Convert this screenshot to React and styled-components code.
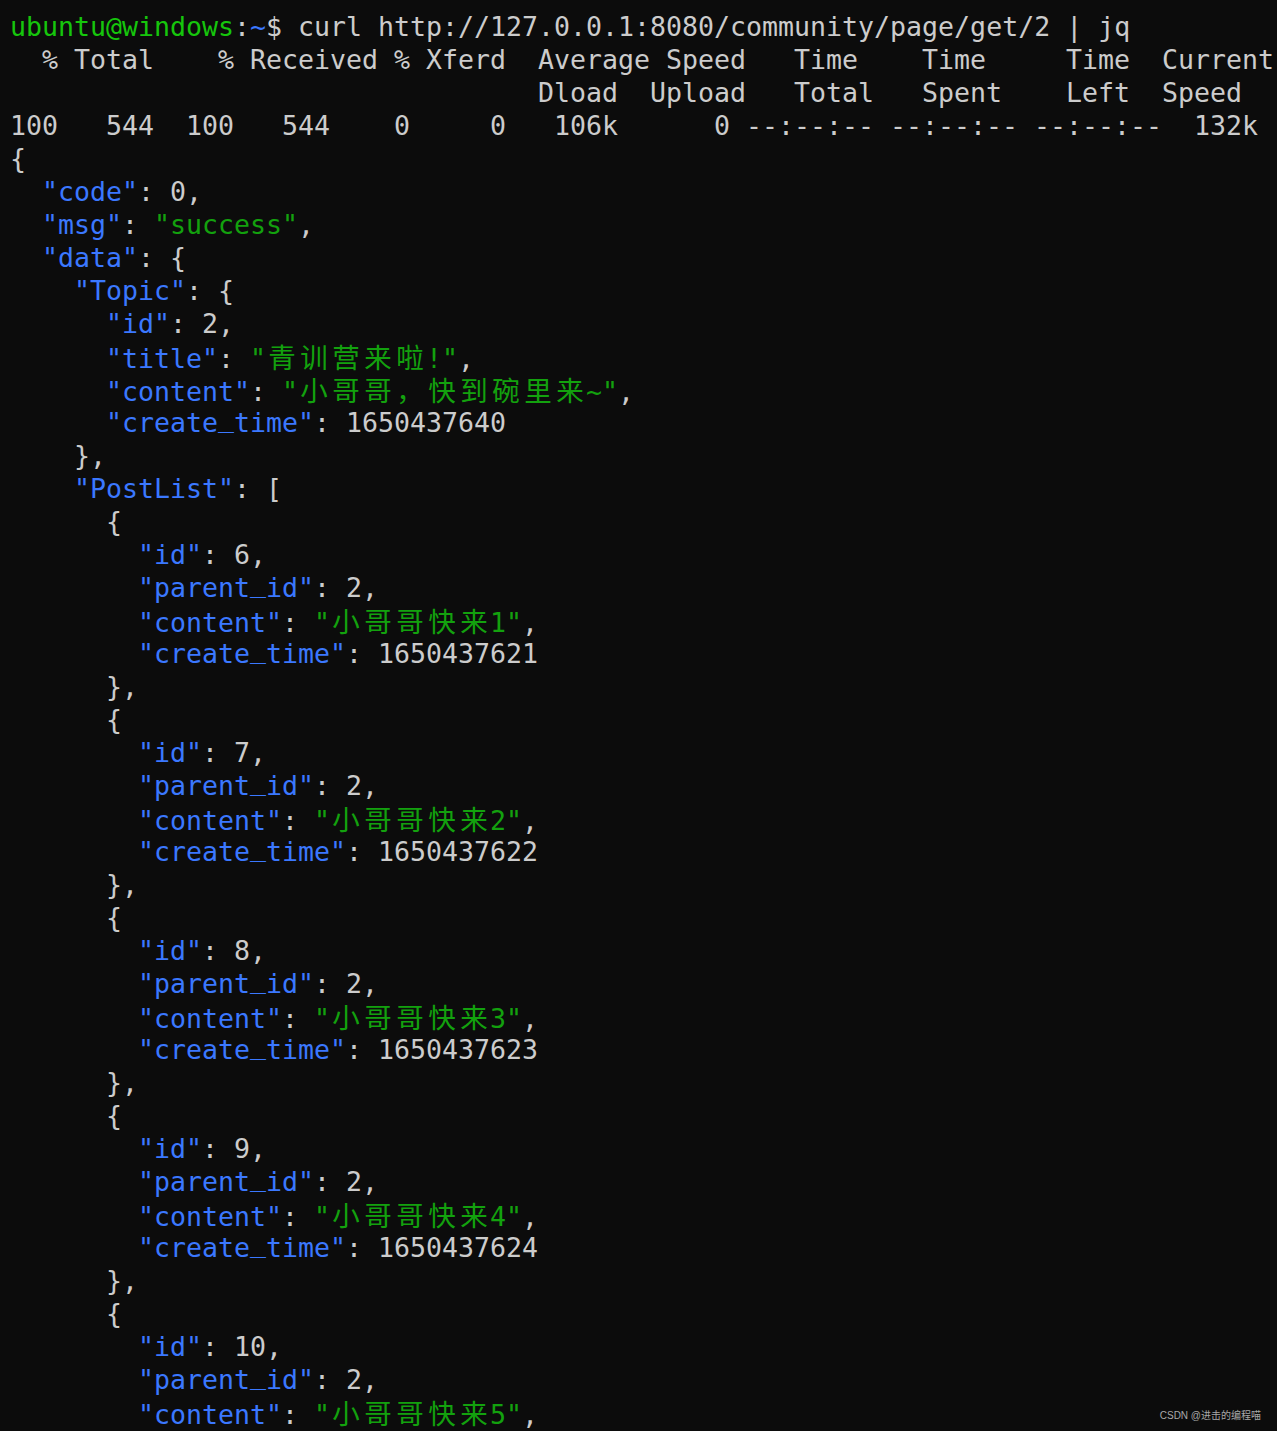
import React from "react";
import styled, {createGlobalStyle} from "styled-components";

const Global = createGlobalStyle`
  html, body {
    margin: 0;
    padding: 0;
    background: #0c0c0c;
  }
`;

const Terminal = styled.div`
  position: relative;
  box-sizing: border-box;
  width: 1277px;
  height: 1431px;
  overflow: hidden;
  padding: 10px 0 0 10px;
  background: #0c0c0c;
  color: #cccccc;
  font-family: "DejaVu Sans Mono", "Liberation Mono", "Noto Sans CJK SC", monospace;
  font-size: 26.58px;
`;

const Line = styled.div`
  height: 33px;
  line-height: 33px;
  white-space: pre;
`;

const colors = {
  p: "#16c60c",
  t: "#3b78ff",
  w: "#cccccc",
  k: "#3b78ff",
  s: "#13a10e",
};

const Tok = styled.span`
  color: ${(p) => colors[p.$kind] || "#cccccc"};
`;

const Wide = styled.span`
  display: inline-block;
  width: 32px;
  text-align: center;
  font-family: "Noto Sans CJK SC", sans-serif;
  font-size: 27.5px;
`;

// the underscore sits near the baseline in the terminal font, lift it a bit
const Under = styled.span`
  display: inline-block;
  width: 16px;
  line-height: 14px;
  vertical-align: 5px;
`;

const Watermark = styled.div`
  position: absolute;
  right: 16px;
  bottom: 9px;
  font-family: "Liberation Sans", "Noto Sans CJK SC", sans-serif;
  font-size: 10px;
  color: #a8a8a8;
`;

// wide (2-cell) chars get their own box so the grid stays aligned
const renderText = (text) => {
  const out = [];
  let buf = "";
  const flush = () => {
    if (buf) out.push(buf);
    buf = "";
  };
  [...text].forEach((ch, i) => {
    if (ch.charCodeAt(0) > 0x2e80) {
      flush();
      out.push(<Wide key={i}>{ch}</Wide>);
    } else if (ch === "_") {
      flush();
      out.push(<Under key={i}>{ch}</Under>);
    } else {
      buf += ch;
    }
  });
  flush();
  return out;
};

const pad = (n) => " ".repeat(n);

// a json "key": value line
const kv = (indent, key, value, kind, comma = true) => [
  ["w", pad(indent)],
  ["k", `"${key}"`],
  ["w", ": "],
  [kind, value],
  ["w", comma ? "," : ""],
];

const plain = (text) => [["w", text]];

const post = (id, n, last) => [
  plain(pad(6) + "{"),
  kv(8, "id", String(id), "w"),
  kv(8, "parent_id", "2", "w"),
  kv(8, "content", `"小哥哥快来${n}"`, "s"),
  kv(8, "create_time", `165043762${n}`, "w", false),
  plain(pad(6) + (last ? "}" : "},")),
];

const lines = [
  [
    ["p", "ubuntu@windows"],
    ["w", ":"],
    ["t", "~"],
    ["w", "$ curl http://127.0.0.1:8080/community/page/get/2 | jq"],
  ],
  plain("  % Total    % Received % Xferd  Average Speed   Time    Time     Time  Current"),
  plain("                                 Dload  Upload   Total   Spent    Left  Speed"),
  plain("100   544  100   544    0     0   106k      0 --:--:-- --:--:-- --:--:--  132k"),
  plain("{"),
  kv(2, "code", "0", "w"),
  kv(2, "msg", '"success"', "s"),
  [["w", "  "], ["k", '"data"'], ["w", ": {"]],
  [["w", "    "], ["k", '"Topic"'], ["w", ": {"]],
  kv(6, "id", "2", "w"),
  kv(6, "title", '"青训营来啦!"', "s"),
  kv(6, "content", '"小哥哥，快到碗里来~"', "s"),
  kv(6, "create_time", "1650437640", "w", false),
  plain("    },"),
  [["w", "    "], ["k", '"PostList"'], ["w", ": ["]],
  ...post(6, 1),
  ...post(7, 2),
  ...post(8, 3),
  ...post(9, 4),
  ...post(10, 5),
];

const App = () => {
  return (
    <>
      <Global />
      <Terminal>
        {lines.map((toks, i) => (
          <Line key={i}>
            {toks.map(([kind, text], j) => (
              <Tok key={j} $kind={kind}>
                {renderText(text)}
              </Tok>
            ))}
          </Line>
        ))}
        <Watermark>CSDN @进击的编程喵</Watermark>
      </Terminal>
    </>
  );
};

export default App;
